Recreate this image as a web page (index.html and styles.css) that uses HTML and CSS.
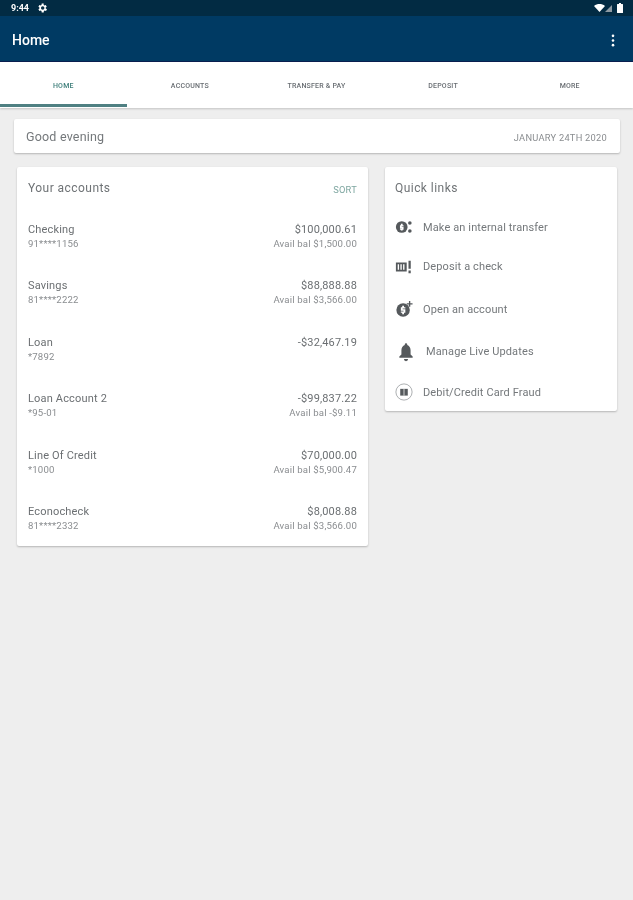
FILE: index.html
```html
<!DOCTYPE html>
<html lang="en">
<head>
<meta charset="utf-8">
<title>Home</title>
<link rel="stylesheet" href="styles.css">
</head>
<body>
<div class="status">
  <div class="status-left">
    <span class="time">9:44</span>
    <svg class="gear" viewBox="0 0 24 24"><path d="M19.400 13a7.500 7.500 0 0 0 0-2l2.100-1.600-2-3.500-2.500 1a7.500 7.500 0 0 0-1.700-1L15.400 3.200h-4l-.4 2.700a7.500 7.500 0 0 0-1.700 1l-2.500-1-2 3.500L6.900 11a7.500 7.500 0 0 0 0 2l-2.100 1.600 2 3.500 2.500-1a7.500 7.500 0 0 0 1.700 1l.4 2.700h4l.4-2.700a7.500 7.500 0 0 0 1.700-1l2.500 1 2-3.500zM13.400 15.500a3.500 3.500 0 1 1 0-7 3.500 3.500 0 0 1 0 7z"/></svg>
  </div>
  <div class="status-right">
    <svg class="wifi" viewBox="0 0 14 10"><path d="M0 2.500C4-.8 10-.8 14 2.500L7 10z"/></svg>
    <svg class="signal" viewBox="0 0 8 8"><path d="M8 0v8H0z"/></svg>
    <svg class="battery" viewBox="0 0 6 10"><path d="M2 0h2v1h1.500a.5.500 0 0 1 .5.500v8a.5.500 0 0 1-.5.500H.5a.5.500 0 0 1-.5-.500v-8A.5.500 0 0 1 .5 1H2z"/></svg>
  </div>
</div>
<header class="appbar">
  <h1 class="title">Home</h1>
  <svg class="kebab" viewBox="0 0 4 14"><circle cx="2" cy="2" r="1.400"/><circle cx="2" cy="7" r="1.400"/><circle cx="2" cy="12" r="1.400"/></svg>
</header>
<nav class="tabs">
  <a class="tab active">HOME</a>
  <a class="tab">ACCOUNTS</a>
  <a class="tab">TRANSFER &amp; PAY</a>
  <a class="tab">DEPOSIT</a>
  <a class="tab">MORE</a>
</nav>
<main class="content">
  <section class="greeting card">
    <span class="greet">Good evening</span>
    <span class="date">JANUARY 24TH 2020</span>
  </section>
  <div class="columns">
    <section class="accounts card">
      <div class="accounts-head">
        <h2 class="card-title">Your accounts</h2>
        <span class="sort">SORT</span>
      </div>
      <div class="row"><div class="cell"><span class="name">Checking</span><span class="sub">91****1156</span></div><div class="cell right"><span class="amount">$100,000.61</span><span class="sub">Avail bal $1,500.00</span></div></div>
      <div class="row"><div class="cell"><span class="name">Savings</span><span class="sub">81****2222</span></div><div class="cell right"><span class="amount">$88,888.88</span><span class="sub">Avail bal $3,566.00</span></div></div>
      <div class="row"><div class="cell"><span class="name">Loan</span><span class="sub">*7892</span></div><div class="cell right"><span class="amount">-$32,467.19</span></div></div>
      <div class="row"><div class="cell"><span class="name">Loan Account 2</span><span class="sub">*95-01</span></div><div class="cell right"><span class="amount">-$99,837.22</span><span class="sub">Avail bal -$9.11</span></div></div>
      <div class="row"><div class="cell"><span class="name">Line Of Credit</span><span class="sub">*1000</span></div><div class="cell right"><span class="amount">$70,000.00</span><span class="sub">Avail bal $5,900.47</span></div></div>
      <div class="row"><div class="cell"><span class="name">Econocheck</span><span class="sub">81****2332</span></div><div class="cell right"><span class="amount">$8,008.88</span><span class="sub">Avail bal $3,566.00</span></div></div>
    </section>
    <section class="links card">
      <h2 class="card-title links-title">Quick links</h2>
      <a class="link h-38">
        <svg class="icon" viewBox="0 0 20 20"><circle cx="7.500" cy="10" r="6.500"/><path class="cut" d="M6.500 6.500h2v1.500h1v1.500h-2v.5h2v3h-1v1h-2v-1h-1v-1.500h2V11h-2V8h1z"/><circle cx="16.500" cy="5.500" r="2"/><circle cx="16.500" cy="14.500" r="2"/></svg>
        <span>Make an internal transfer</span>
      </a>
      <a class="link h-41">
        <svg class="icon" viewBox="0 0 20 20"><path d="M1 5h12v10H1z"/><path class="cut" d="M3 7h1.500v6H3zM6 7h1.500v6H6zM9 7h1.500v6H9z"/><path d="M15 3h2.500v9H15zM15 14h2.500v3H15z"/></svg>
        <span>Deposit a check</span>
      </a>
      <a class="link h-44">
        <svg class="icon" viewBox="0 0 20 20"><circle cx="9" cy="11" r="7.500"/><path class="cut" d="M8 6.500h2V8h1.500v1.500H8.500v.7h3v4h-1.500v1.500H8v-1.500H6.500v-1.500h3v-.7h-3V8H8z"/><path d="M15.500 1h1.500v2.500h2.500V5H17v2.500h-1.500V5H13V3.500h2.500z"/></svg>
        <span>Open an account</span>
      </a>
      <a class="link h-41">
        <svg class="icon bell" viewBox="0 0 24 24"><path d="M12 23a2.500 2.500 0 0 0 2.500-2.500h-5A2.500 2.500 0 0 0 12 23zm8-5.500-2.500-2.500V10c0-3.100-1.600-5.600-4-6.300V3a1.500 1.500 0 0 0-3 0v.7c-2.400.7-4 3.200-4 6.300v5L4 17.500V19h16z"/></svg>
        <span>Manage Live Updates</span>
      </a>
      <a class="link h-40">
        <svg class="icon" viewBox="0 0 20 20"><circle class="ring" cx="10" cy="10" r="9"/><path d="M5.800 6.500h8.400v7.500H5.800z"/><path class="cut" d="M9.600 6.500h.8V14h-.8z"/></svg>
        <span>Debit/Credit Card Fraud</span>
      </a>
    </section>
  </div>
</main>
</body>
</html>
```
FILE: styles.css
```css
* { box-sizing: border-box; }
html, body { margin: 0; height: 100%; }
body {
  width: 633px;
  min-height: 900px;
  background: #eeeeee;
  font-family: Roboto, "Liberation Sans", sans-serif;
  color: #6b6f72;
  overflow: hidden;
}
.status {
  height: 16px;
  background: #022b43;
  display: flex;
  justify-content: space-between;
  align-items: center;
  padding: 0 10px 0 11px;
  filter: blur(.35px);
}
.status-left, .status-right { display: flex; align-items: center; }
.time { color: #fff; font-size: 9px; font-weight: 700; }
.gear { width: 12px; height: 12px; fill: #fff; margin-left: 7px; }
.wifi { width: 11px; height: 8px; fill: #fff; }
.signal { width: 7px; height: 7px; fill: #8d9aa3; margin-top: 1px; }
.battery { width: 6px; height: 10px; fill: #fff; margin-left: 5px; }
.appbar {
  height: 46px;
  background: #003a63;
  border-bottom: 1px solid #0a1f50;
  display: flex;
  align-items: center;
  justify-content: space-between;
  padding: 3px 18px 0 12px;
}
.title { margin: 0; color: #fff; font-size: 14px; font-weight: 500; filter: blur(.35px); }
.kebab { width: 4px; height: 13px; fill: #fff; filter: blur(.35px); }
.tabs {
  height: 46px;
  background: #fff;
  display: grid;
  grid-template-columns: repeat(5, 1fr);
  box-shadow: 0 1px 2px rgba(0,0,0,.18);
}
.tab {
  display: flex;
  align-items: center;
  justify-content: center;
  padding-top: 1px;
  font-size: 7px;
  font-weight: 500;
  color: #686d72;
  letter-spacing: .2px;
  filter: blur(.3px);
}
.tab.active { color: #3f7f7b; box-shadow: inset 0 -3px 0 #4f8082; height: 45px; padding-top: 2px; }
.card {
  background: #fff;
  border-radius: 2px;
  box-shadow: 0 1px 2px rgba(0,0,0,.24);
}
.content { padding: 11px 13px 0 14px; }
.greeting {
  height: 34px;
  display: flex;
  align-items: center;
  justify-content: space-between;
  padding: 0 13px 0 12px;
}
.greet { font-size: 12.500px; color: #74787b; letter-spacing: .2px; filter: blur(.35px); }
.date { font-size: 9.300px; color: #8a8d90; letter-spacing: .25px; margin-top: 3px; filter: blur(.35px); }
.columns {
  display: flex;
  align-items: flex-start;
  gap: 17px;
  margin: 14px 3px 0 3px;
}
.accounts { width: 351px; height: 379px; padding: 0 11px; }
.accounts-head {
  display: flex;
  justify-content: space-between;
  align-items: center;
  height: 41px;
  margin-bottom: 14.500px;
  filter: blur(.35px);
}
.card-title { margin: 0; font-size: 12px; font-weight: 400; color: #6f7376; letter-spacing: .45px; }
.sort { font-size: 9.300px; color: #7ea6a0; letter-spacing: .25px; margin-top: 4px; }
.row {
  display: flex;
  justify-content: space-between;
  height: 56.500px;
  filter: blur(.35px);
}
.cell { display: flex; flex-direction: column; gap: 1px; }
.right { align-items: flex-end; }
.name { font-size: 11px; line-height: 14px; color: #6b6f72; letter-spacing: .17px; }
.amount { font-size: 11px; line-height: 14px; color: #6b6f72; letter-spacing: .15px; }
.sub { font-size: 9.600px; line-height: 12px; color: #8a8d90; letter-spacing: .17px; }
.links { width: 232px; height: 244px; padding: 0 10px; }
.links-title { height: 41px; line-height: 42px; filter: blur(.35px); }
.link {
  display: flex;
  align-items: center;
  font-size: 11px;
  color: #74787b;
  letter-spacing: .12px;
  filter: blur(.35px);
}
.h-38 { height: 38px; }
.h-41 { height: 41px; }
.h-44 { height: 44px; }
.h-40 { height: 40px; }
.icon { width: 18px; height: 18px; fill: #55595c; margin-right: 10px; flex: none; }
.bell { width: 20px; height: 20px; margin-right: 10px; margin-left: 1px; }
.cut { fill: #fff; }
.ring { fill: none; stroke: #9a9da0; stroke-width: .9; }
```
